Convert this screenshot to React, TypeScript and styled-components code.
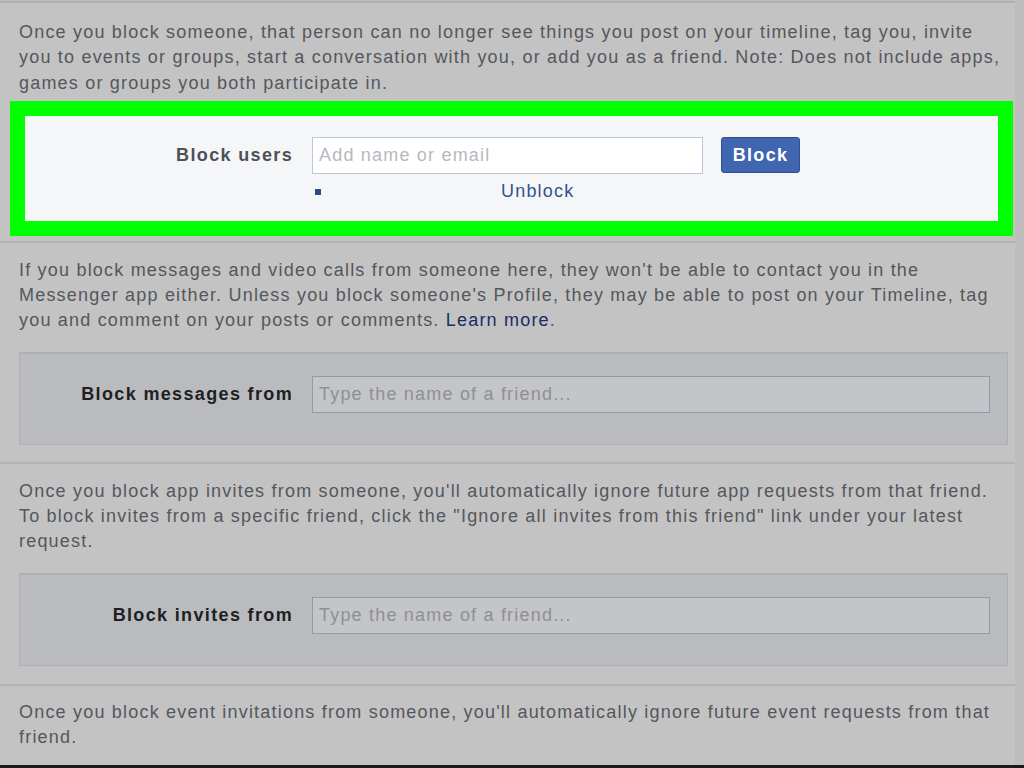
import styled, { createGlobalStyle } from 'styled-components';

const GlobalStyle = createGlobalStyle`
  html, body {
    margin: 0;
    padding: 0;
    background: #bebebe;
  }
  body {
    font-family: "Liberation Sans", Arial, sans-serif;
  }
`;

const Screen = styled.div`
  width: 1024px;
  height: 768px;
  overflow: hidden;
  background: #bdbdbd;
  border-bottom: 3px solid #1a1a1a;
  box-sizing: border-box;
`;

const Page = styled.main`
  width: 1015px;
  height: 100%;
  background: #c3c3c3;
  border-top: 2px solid #b2b2b2;
  margin-top: 1px;
  box-sizing: border-box;
`;

const Section = styled.section`
  padding: 0 0 0 19px;
  display: flex;
  flex-direction: column;
`;

const Separator = styled.hr`
  margin: 0;
  border: none;
  height: 2px;
  background: #b3b3b4;
`;

const Paragraph = styled.p<{ $top: number }>`
  margin: ${(p) => p.$top}px 0 0 0;
  width: 990px;
  font-size: 18px;
  line-height: 25.3px;
  letter-spacing: 1.2px;
  color: #54575d;
`;

const LearnMore = styled.a`
  color: #1c2a65;
  text-decoration: none;
`;

const Highlight = styled.div`
  margin: 5px 0 0 -9px;
  width: 973px;
  border: 15px solid #00ff00;
  background: #f5f6f8;
  padding: 21px 0 0 0;
  height: 84px;
`;

const FormRow = styled.div`
  display: flex;
  align-items: center;
`;

const Label = styled.label<{ $dark?: boolean }>`
  width: 268px;
  padding-right: 19px;
  text-align: right;
  font-size: 18px;
  font-weight: bold;
  letter-spacing: 1.35px;
  color: ${(p) => (p.$dark ? '#1e1f22' : '#4d5057')};
  flex-shrink: 0;
`;

const TextInput = styled.input<{ $muted?: boolean; $width: number }>`
  width: ${(p) => p.$width}px;
  height: 37px;
  box-sizing: border-box;
  padding: 0 6px;
  font-family: "Liberation Sans", Arial, sans-serif;
  font-size: 18px;
  letter-spacing: 1.2px;
  outline: none;
  border: 1px solid ${(p) => (p.$muted ? '#9299ab' : '#bfc8d8')};
  background: ${(p) => (p.$muted ? '#c4c5c8' : '#ffffff')};
  color: #333;
  &::placeholder {
    color: ${(p) => (p.$muted ? '#8e9093' : '#b5b9c0')};
  }
`;

const BlockButton = styled.button`
  margin-left: 18px;
  width: 79px;
  height: 36px;
  border: 1px solid #32508f;
  border-radius: 3px;
  background: #4166b1;
  color: #fff;
  font-family: "Liberation Sans", Arial, sans-serif;
  font-size: 18px;
  font-weight: bold;
  letter-spacing: 1.3px;
  padding: 0;
`;

const ListRow = styled.div`
  display: flex;
  align-items: center;
  margin: 5px 0 0 290px;
  height: 26px;
`;

const Bullet = styled.span`
  width: 6px;
  height: 6px;
  background: #32498c;
  margin-right: 180px;
`;

const UnblockLink = styled.a`
  font-size: 18px;
  letter-spacing: 1.2px;
  color: #34528f;
  text-decoration: none;
`;

const GreyPanel = styled.div`
  margin-top: 18px;
  width: 989px;
  height: 93px;
  background: #babbbe;
  border: 1px solid #afb0b3;
  border-top-width: 2px;
  display: flex;
  align-items: flex-start;
  padding-top: 22px;
  box-sizing: border-box;
`;

const PanelLabel = styled(Label)`
  width: 273px;
  line-height: 37px;
`;

const BottomGap = styled.div<{ $h: number }>`
  height: ${(p) => p.$h}px;
`;

export default function App() {
  return (
    <>
      <GlobalStyle />
      <Screen>
        <Page>
          <Section>
            <Paragraph $top={17}>
              Once you block someone, that person can no longer see things you post on your
              timeline, tag you, invite you to events or groups, start a conversation with you,
              or add you as a friend. Note: Does not include apps, games or groups you both
              participate in.
            </Paragraph>
            <Highlight>
              <FormRow>
                <Label>Block users</Label>
                <TextInput $width={391} placeholder="Add name or email" />
                <BlockButton>Block</BlockButton>
              </FormRow>
              <ListRow>
                <Bullet />
                <UnblockLink href="#">Unblock</UnblockLink>
              </ListRow>
            </Highlight>
            <BottomGap $h={5} />
          </Section>
          <Separator />
          <Section>
            <Paragraph $top={15}>
              If you block messages and video calls from someone here, they won't be able to
              contact you in the Messenger app either. Unless you block someone's Profile, they
              may be able to post on your Timeline, tag you and comment on your posts or
              comments. <LearnMore href="#">Learn more</LearnMore>.
            </Paragraph>
            <GreyPanel>
              <PanelLabel $dark>Block messages from</PanelLabel>
              <TextInput $muted $width={678} placeholder="Type the name of a friend..." />
            </GreyPanel>
            <BottomGap $h={17} />
          </Section>
          <Separator />
          <Section>
            <Paragraph $top={15}>
              Once you block app invites from someone, you'll automatically ignore future app
              requests from that friend. To block invites from a specific friend, click the
              "Ignore all invites from this friend" link under your latest request.
            </Paragraph>
            <GreyPanel>
              <PanelLabel $dark>Block invites from</PanelLabel>
              <TextInput $muted $width={678} placeholder="Type the name of a friend..." />
            </GreyPanel>
            <BottomGap $h={18} />
          </Section>
          <Separator />
          <Section>
            <Paragraph $top={14}>
              Once you block event invitations from someone, you'll automatically ignore future
              event requests from that friend.
            </Paragraph>
          </Section>
        </Page>
      </Screen>
    </>
  );
}
